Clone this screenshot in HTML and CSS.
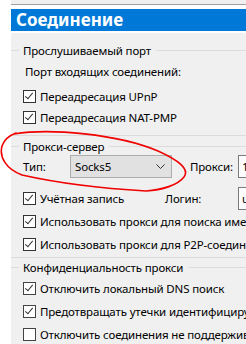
FILE: index.html
```html
<!DOCTYPE html>
<html lang="ru">
<head>
    <meta charset="UTF-8">
    <title>Соединение</title>
    <link rel="stylesheet" href="styles.css">
</head>
<body>
    <div class="window">
        <div class="top-strip"></div>
        <div class="header">Соединение</div>

        <div class="panel">
            <!-- Listening port -->
            <div class="group group-port">
                <div class="group-title"><span>Прослушиваемый порт</span></div>
                <div class="row row-label">Порт входящих соединений:</div>
                <label class="row check-row"><span class="box checked"></span>Переадресация UPnP</label>
                <label class="row check-row"><span class="box checked"></span>Переадресация NAT-PMP</label>
            </div>

            <!-- Proxy server -->
            <div class="group group-proxy">
                <div class="group-title"><span>Прокси-сервер</span></div>
                <div class="row row-type">
                    <span class="type-label">Тип:</span>
                    <div class="combo">
                        <span>Socks5</span>
                        <svg class="chevron" width="9" height="5" viewBox="0 0 9 5">
                            <path d="M0.5 0.5 L4.5 4.5 L8.5 0.5" fill="none" stroke="#333" stroke-width="1"/>
                        </svg>
                    </div>
                    <span class="field-label">Прокси:</span>
                    <div class="field">127.0.0.1</div>
                </div>
                <div class="row check-row row-auth">
                    <span class="box checked"></span><span class="auth-text">Учётная запись</span>
                    <span class="field-label login-label">Логин:</span>
                    <div class="field">user</div>
                </div>
                <label class="row check-row"><span class="box checked"></span>Использовать прокси для поиска имен хостов</label>
                <label class="row check-row"><span class="box checked"></span>Использовать прокси для P2P-соединений</label>
            </div>

            <!-- Proxy privacy -->
            <div class="group group-privacy">
                <div class="group-title"><span>Конфиденциальность прокси</span></div>
                <label class="row check-row tall"><span class="box checked light"></span>Отключить локальный DNS поиск</label>
                <label class="row check-row tall"><span class="box checked light"></span>Предотвращать утечки идентифицирующей информации</label>
                <label class="row check-row tall"><span class="box light"></span>Отключить соединения не поддерживаемые прокси</label>
            </div>
        </div>
    </div>

    <!-- red hand-drawn mark over the proxy type -->
    <svg class="scribble" width="246" height="344" viewBox="0 0 246 344">
        <path d="M14 134 C50 128 118 134 158 151 C178 160 190 169 184 177 C178 185 162 190 146 191 C112 189 62 184 22 175 C6 169 -1 157 2 146 C4 140 8 136 16 133"
              fill="none" stroke="#f00000" stroke-width="1.6" stroke-linecap="round"/>
    </svg>
</body>
</html>
```

FILE: styles.css
```css
body {
    margin: 0;
    background: #fff;
    font-family: 'Noto Sans', 'Open Sans', Arial, sans-serif;
    font-size: 11.5px;
    letter-spacing: -0.15px;
    color: #000;
    overflow: hidden;
}
.window {
    margin-left: 11px;
    width: 235px;
    height: 344px;
    overflow: hidden;
}
.top-strip {
    height: 4px;
    background: #f0f0f0;
    border-bottom: 1px solid #a0a0a0;
    margin-bottom: 4px;
}
.header {
    height: 22px;
    line-height: 22px;
    background: #0078d7;
    color: #fff;
    font-weight: bold;
    font-size: 17px;
    letter-spacing: 0;
    padding-left: 5px;
    margin-bottom: 2px;
}
.panel {
    background: #f0f0f0;
    height: 320px;
}
.group {
    border-bottom: 1px solid #dcdcdc;
}
.group-port {
    padding-top: 8px;
    padding-bottom: 7px;
}
.group-proxy {
    padding-top: 1px;
    padding-bottom: 1px;
}
.group-title {
    display: flex;
    align-items: center;
    height: 18px;
    white-space: nowrap;
}
.group-title::before {
    content: '';
    width: 8px;
    border-top: 1px solid #dcdcdc;
    margin-right: 4px;
}
.group-title::after {
    content: '';
    flex: 1;
    border-top: 1px solid #dcdcdc;
    margin-left: 5px;
}
.row {
    display: flex;
    align-items: center;
    padding-left: 12px;
    white-space: nowrap;
}
.row > * {
    flex: none;
}
.row-label {
    height: 20px;
    margin-top: 2px;
    padding-left: 14px;
}
.check-row {
    height: 21px;
}
.group-port .check-row:first-of-type {
    margin-top: 5px;
}
.group-proxy .check-row {
    height: 23px;
}
.tall {
    height: 23px;
}
.group-privacy .tall:first-of-type {
    margin-top: 1px;
}
.box {
    width: 11px;
    height: 11px;
    border: 1px solid #333;
    background: #fff;
    margin-right: 4px;
    position: relative;
}
.box.light {
    border-color: #444;
}
.box.checked::after {
    content: '';
    position: absolute;
    left: 3px;
    top: 0;
    width: 3px;
    height: 7px;
    border-right: 1.4px solid #333;
    border-bottom: 1.4px solid #333;
    transform: rotate(40deg);
}
.row-type {
    height: 23px;
}
.type-label {
    width: 47px;
}
.combo {
    width: 102px;
    height: 23px;
    box-sizing: border-box;
    background: #e1e1e1;
    border: 1px solid #adadad;
    display: flex;
    align-items: center;
    padding-left: 4px;
}
.combo span {
    flex: 1;
}
.chevron {
    margin-right: 6px;
}
.field-label {
    margin-left: 18px;
    width: 48px;
}
.field {
    width: 80px;
    height: 23px;
    box-sizing: border-box;
    background: #fff;
    border: 1px solid #7a7a7a;
    padding-left: 3px;
    line-height: 21px;
}
.row-auth {
    margin-top: 9px;
}
.auth-text {
    width: 110px;
}
.login-label {
    margin-left: 15px;
    width: 73px;
}
.scribble {
    position: absolute;
    left: 0;
    top: 0;
    pointer-events: none;
}
```
